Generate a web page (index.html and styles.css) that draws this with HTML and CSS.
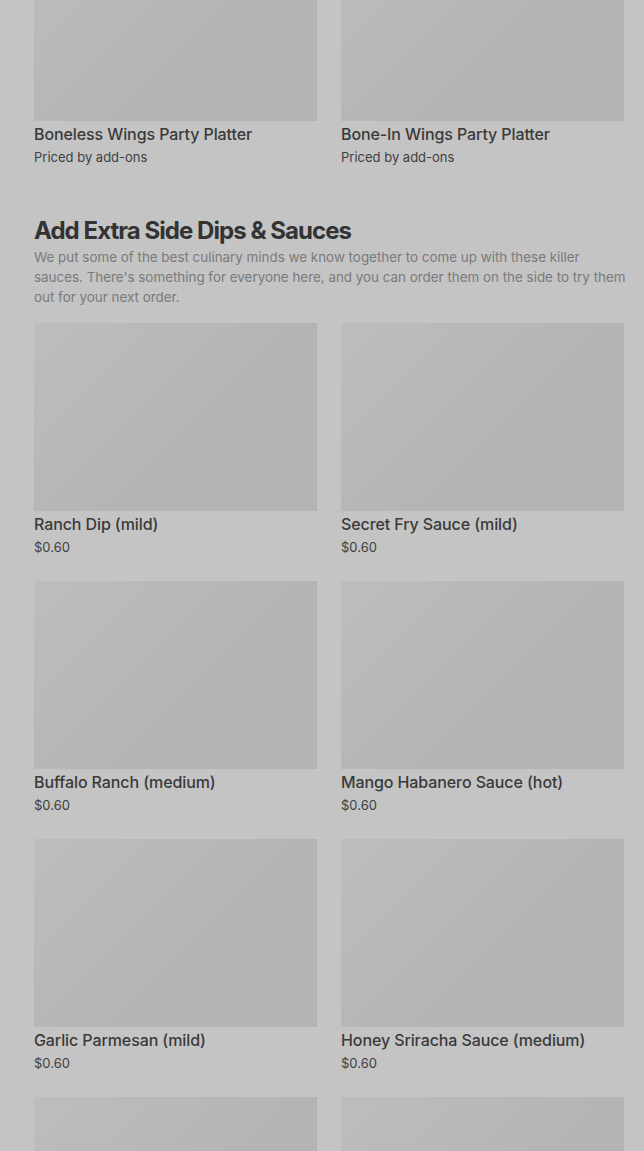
FILE: index.html
```html
<!DOCTYPE html>
<html lang="en">
  <head>
    <meta charset="UTF-8" />
    <meta name="viewport" content="width=device-width, initial-scale=1.0" />
    <title>Menu</title>
    <link rel="stylesheet" href="styles.css">
  </head>
  <body>
    <div class="menu">
      <section class="section first">
        <div class="grid">
          <div class="item">
            <div class="thumb"></div>
            <div class="name">Boneless Wings Party Platter</div>
            <div class="price">Priced by add-ons</div>
          </div>
          <div class="item">
            <div class="thumb"></div>
            <div class="name">Bone-In Wings Party Platter</div>
            <div class="price">Priced by add-ons</div>
          </div>
        </div>
      </section>

      <section class="section">
        <h2 class="section-title">Add Extra Side Dips &amp; Sauces</h2>
        <p class="section-desc">We put some of the best culinary minds we know together to come up with these killer sauces. There's something for everyone here, and you can order them on the side to try them out for your next order.</p>
        <div class="grid">
          <div class="item">
            <div class="thumb"></div>
            <div class="name">Ranch Dip (mild)</div>
            <div class="price">$0.60</div>
          </div>
          <div class="item">
            <div class="thumb"></div>
            <div class="name">Secret Fry Sauce (mild)</div>
            <div class="price">$0.60</div>
          </div>
          <div class="item">
            <div class="thumb"></div>
            <div class="name">Buffalo Ranch (medium)</div>
            <div class="price">$0.60</div>
          </div>
          <div class="item">
            <div class="thumb"></div>
            <div class="name">Mango Habanero Sauce (hot)</div>
            <div class="price">$0.60</div>
          </div>
          <div class="item">
            <div class="thumb"></div>
            <div class="name">Garlic Parmesan (mild)</div>
            <div class="price">$0.60</div>
          </div>
          <div class="item">
            <div class="thumb"></div>
            <div class="name">Honey Sriracha Sauce (medium)</div>
            <div class="price">$0.60</div>
          </div>
          <div class="item">
            <div class="thumb"></div>
          </div>
          <div class="item">
            <div class="thumb"></div>
          </div>
        </div>
      </section>
    </div>
  </body>
</html>
```

FILE: styles.css
```css
html,
body {
  margin: 0;
  padding: 0;
  background-color: #c4c4c4;
  overflow: hidden;
}
body {
  font-family: Inter, "Liberation Sans", sans-serif;
  color: #3a3a3a;
}
.menu {
  padding: 0 20px 0 34px;
  margin-top: -67px;
}
.section {
  padding-bottom: 48px;
}
.grid {
  display: grid;
  grid-template-columns: 1fr 1fr;
  gap: 24px;
}
.thumb {
  height: 188px;
  background: linear-gradient(135deg, #bdbdbd, #b4b4b4 60%);
}
.name {
  font-size: 16px;
  font-weight: 500;
  line-height: 24px;
  letter-spacing: -0.1px;
  margin-top: 1px;
  color: #3a3a3a;
}
.price {
  font-size: 13px;
  line-height: 20px;
  margin-top: 1px;
  color: #3f3f3f;
}
.section-title {
  margin: 0;
  font-size: 24px;
  font-weight: 700;
  line-height: 32px;
  letter-spacing: -0.95px;
  color: #333333;
}
.section-desc {
  margin: 0 -8px 16px 0;
  font-size: 13.4px;
  line-height: 20px;
  color: #7a7a7a;
}
```
